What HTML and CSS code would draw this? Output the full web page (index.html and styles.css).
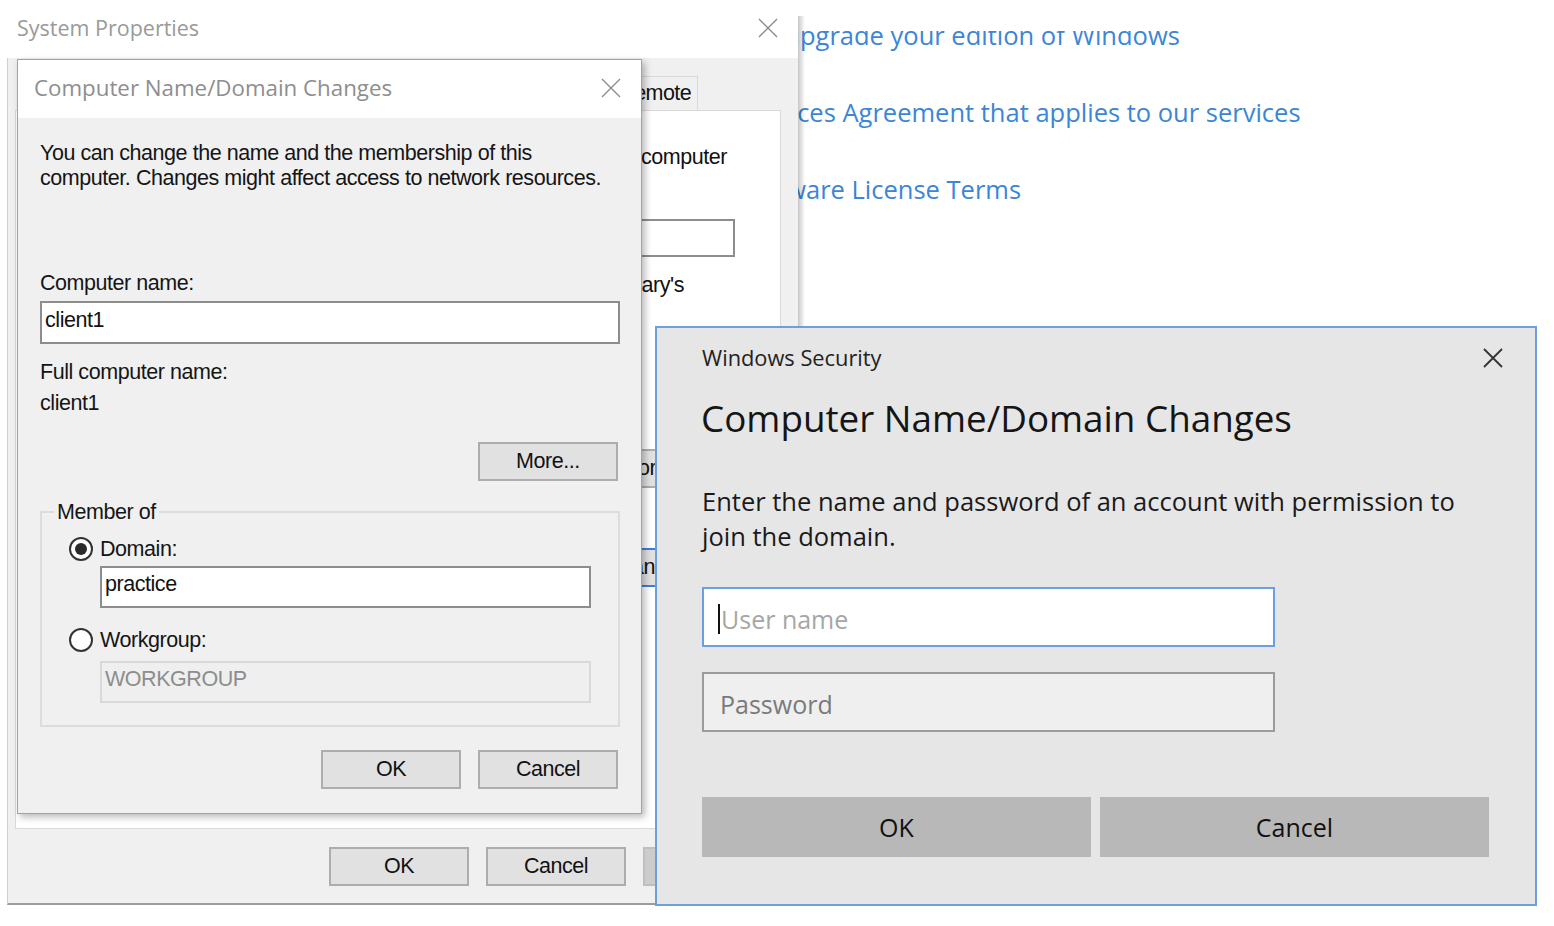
FILE: index.html
```html
<!DOCTYPE html>
<html lang="en">
<head>
<meta charset="utf-8">
<title>Computer Name/Domain Changes</title>
<link rel="stylesheet" href="styles.css">
</head>
<body>
<main class="desktop">

  <section class="settings-window">
    <ul class="settings-links">
      <li><a class="link" href="#">Change product key or upgrade your edition of Windows</a></li>
      <li><a class="link" href="#">Read the Microsoft Services Agreement that applies to our services</a></li>
      <li><a class="link" href="#">Read the Microsoft Software License Terms</a></li>
    </ul>
  </section>

  <section class="sysprops">
    <header class="sp-titlebar">
      <span class="wtitle">System Properties</span>
      <svg class="close-x" viewBox="0 0 20 20" width="20" height="20"><path d="M1 1L19 19M19 1L1 19"/></svg>
    </header>
    <div class="sp-client">
      <nav class="tabs">
        <span class="tab">Remote</span>
      </nav>
      <div class="tabpanel">
        <span class="sp-line intro-end">computer</span>
        <div class="textbox desc-box"></div>
        <span class="sp-line hint-end">Mary's</span>
        <button class="btn sp-btn netid">Network ID...</button>
        <button class="btn sp-btn change focused">Change...</button>
      </div>
      <div class="sp-footer">
        <button class="btn">OK</button>
        <button class="btn">Cancel</button>
        <button class="btn disabled">Apply</button>
      </div>
    </div>
  </section>

  <section class="cndc">
    <header class="cn-titlebar">
      <span class="wtitle">Computer Name/Domain Changes</span>
      <svg class="close-x" viewBox="0 0 20 20" width="20" height="20"><path d="M1 1L19 19M19 1L1 19"/></svg>
    </header>
    <div class="cn-body">
      <p class="cn-intro">You can change the name and the membership of this<br>computer. Changes might affect access to network resources.</p>
      <div class="cn-label first">Computer name:</div>
      <div class="textbox cn-name">client1</div>
      <div class="cn-label full">Full computer name:</div>
      <div class="cn-value">client1</div>
      <button class="btn more">More...</button>
      <fieldset class="groupbox">
        <legend>Member of</legend>
        <div class="radio-row"><span class="radio checked"></span><span>Domain:</span></div>
        <div class="textbox indent domain">practice</div>
        <div class="radio-row second"><span class="radio"></span><span>Workgroup:</span></div>
        <div class="textbox indent wg disabled-box">WORKGROUP</div>
      </fieldset>
      <div class="cn-buttons">
        <button class="btn">OK</button>
        <button class="btn">Cancel</button>
      </div>
    </div>
  </section>

  <section class="winsec">
    <header class="ws-head">
      <span class="ws-app">Windows Security</span>
      <svg class="ws-close" viewBox="0 0 22 22" width="22" height="22"><path d="M2 2L20 20M20 2L2 20"/></svg>
    </header>
    <h1 class="ws-title">Computer Name/Domain Changes</h1>
    <p class="ws-text">Enter the name and password of an account with permission to join the domain.</p>
    <div class="ws-input active"><span class="caret"></span><span class="ph light">User name</span></div>
    <div class="ws-input pw"><span class="ph">Password</span></div>
    <div class="ws-buttons">
      <button class="ws-btn">OK</button>
      <button class="ws-btn">Cancel</button>
    </div>
  </section>

</main>
</body>
</html>
```

FILE: styles.css
```css
* { box-sizing: border-box; margin: 0; padding: 0; }
html, body { width: 1554px; height: 926px; }
body {
  background: #fff;
  font-family: "Liberation Sans", Arial, sans-serif;
  color: #111;
  overflow: hidden;
}
.desktop { position: relative; width: 1554px; height: 926px; overflow: hidden; }

/* ---------- settings page behind (visible only right of the System Properties window) ---------- */
.settings-window {
  position: absolute;
  left: 798px;
  top: 31px;
  width: 750px;
  height: 200px;
  overflow: hidden;
}
.settings-links {
  list-style: none;
  margin-top: -13px;
  margin-left: -290px;
  display: flex;
  flex-direction: column;
  gap: 43px;
}
.settings-links li {
  font-family: "Open Sans", sans-serif;
  font-size: 25.5px;
  line-height: 34px;
  white-space: nowrap;
}
.link { color: #3b86d6; text-decoration: none; }

/* ---------- generic ---------- */
.wtitle {
  font-family: "Open Sans", sans-serif;
  font-size: 21.5px;
  color: #9a9a9a;
}
.close-x { stroke: #8a8a8a; stroke-width: 1.3; fill: none; }

.btn {
  width: 140px;
  height: 39px;
  background: #e1e1e1;
  border: 2px solid #adadad;
  font-family: "Liberation Sans", Arial, sans-serif;
  font-size: 21.5px;
  letter-spacing: -0.45px;
  color: #111;
  display: flex;
  align-items: center;
  justify-content: center;
  flex: none;
}
.btn.focused { border-color: #3d7fd8; }
.btn.disabled { background: #cccccc; border-color: #bfbfbf; color: #838383; }

.textbox {
  background: #fff;
  border: 2px solid #8d8d8d;
  line-height: 25px;
  padding: 5px 3px;
  color: #111;
}

/* ---------- System Properties (back window) ---------- */
.sysprops {
  position: absolute;
  left: 7px;
  top: 0;
  width: 791px;
  height: 905px;
  display: flex;
  flex-direction: column;
}
.sysprops::after {
  content: "";
  position: absolute;
  top: 16px;
  right: -7px;
  bottom: 0;
  width: 7px;
  background: linear-gradient(to right, rgba(0,0,0,.22), rgba(0,0,0,0));
}
.sp-titlebar {
  height: 58px;
  flex: none;
  background: #fff;
  display: flex;
  align-items: center;
  justify-content: space-between;
  padding: 0 20px 3px 10px;
}
.sp-client {
  flex: 1;
  background: #f0f0f0;
  border-left: 1px solid #cfcfcf;
  border-bottom: 2px solid #9c9c9c;
  padding: 18px 15px 0 7px;
  display: flex;
  flex-direction: column;
  font-size: 21.5px;
  letter-spacing: -0.45px;
  line-height: 25px;
}
.tabs {
  height: 34px;
  display: flex;
  justify-content: flex-end;
  padding-right: 85px;
}
.tab {
  padding: 4px 6px 0 8px;
  border: 1px solid #d9d9d9;
  border-bottom: none;
  white-space: nowrap;
  background: #f0f0f0;
  letter-spacing: -0.6px;
}
.tabpanel {
  height: 719px;
  margin-right: 2px;
  background: #fff;
  border: 1px solid #d9d9d9;
  display: flex;
  flex-direction: column;
  align-items: flex-end;
}
.sp-line { white-space: nowrap; }
.intro-end { margin-top: 33.5px; margin-right: 53px; }
.desc-box { margin-top: 49.5px; margin-right: 45px; width: 470px; height: 38px; }
.hint-end { margin-top: 15.5px; margin-right: 96px; }
.sp-btn { margin-right: 60px; }
.netid { margin-top: 151.5px; }
.change { margin-top: 60px; }
.sp-footer {
  margin-top: 18px;
  display: flex;
  justify-content: flex-end;
  gap: 17px;
}

/* ---------- Computer Name/Domain Changes (front classic dialog) ---------- */
.cndc {
  position: absolute;
  left: 17px;
  top: 59px;
  width: 625px;
  height: 755px;
  border: 1px solid #a3a3a3;
  box-shadow: 3px 3px 7px rgba(0,0,0,.28);
  background: #f0f0f0;
  display: flex;
  flex-direction: column;
}
.cn-titlebar {
  height: 58px;
  flex: none;
  background: #fff;
  display: flex;
  align-items: center;
  justify-content: space-between;
  padding: 0 20px 3px 16px;
}
.cn-titlebar .wtitle { font-size: 22.3px; color: #8e8e8e; }
.cn-body {
  flex: 1;
  padding: 22.5px 21px 0 22px;
  display: flex;
  flex-direction: column;
  font-size: 21.5px;
  letter-spacing: -0.45px;
  line-height: 25px;
  color: #151515;
}
.cn-label.first { margin-top: 80px; }
.cn-name { margin-top: 5.5px; height: 43px; padding: 5px 3px; }
.cn-label.full { margin-top: 15.5px; }
.cn-value { margin-top: 6px; }
.more { margin-top: 26.5px; align-self: flex-end; margin-right: 2px; }

.groupbox {
  margin-top: 18.5px;
  border: 2px solid #dcdcdc;
  padding: 0 27px 22px 27px;
  display: flex;
  flex-direction: column;
}
.groupbox legend {
  margin-left: -15px;
  padding: 0 3px;
  line-height: 25px;
}
.radio-row {
  margin-top: 12px;
  display: flex;
  align-items: center;
  gap: 7px;
  height: 25px;
}
.radio-row.second { margin-top: 19.5px; }
.radio {
  width: 24px;
  height: 24px;
  border: 2px solid #333;
  border-radius: 50%;
  background: #fff;
  display: flex;
  align-items: center;
  justify-content: center;
}
.radio.checked::after {
  content: "";
  width: 12px;
  height: 12px;
  border-radius: 50%;
  background: #2a2a2a;
}
.textbox.indent { margin-left: 31px; height: 42px; padding: 4px 3px; }
.textbox.domain { margin-top: 4.5px; }
.textbox.wg { margin-top: 8.5px; }
.disabled-box {
  background: #efefef;
  border-color: #d9d9d9;
  color: #8d8d8d;
}
.cn-buttons {
  margin-top: 23px;
  display: flex;
  justify-content: flex-end;
  gap: 17px;
  padding-right: 2px;
}

/* ---------- Windows Security ---------- */
.winsec {
  position: absolute;
  left: 655px;
  top: 326px;
  width: 882px;
  height: 580px;
  background: #e6e6e6;
  border: 2px solid #6d9fdc;
  padding: 15px 46px 0 45px;
  display: flex;
  flex-direction: column;
  font-family: "Open Sans", sans-serif;
  color: #1a1a1a;
}
.ws-head {
  height: 30px;
  display: flex;
  align-items: center;
  justify-content: space-between;
  margin-right: -15px;
}
.ws-app { font-size: 21.8px; line-height: 30px; color: #222; }
.ws-close { stroke: #333; stroke-width: 1.8; fill: none; }
.ws-title {
  margin-top: 21px;
  margin-left: -1px;
  font-size: 36.8px;
  line-height: 48px;
  font-weight: 400;
  color: #151515;
}
.ws-text {
  margin-top: 42px;
  font-size: 25.5px;
  line-height: 35px;
}
.ws-input {
  width: 573px;
  height: 60px;
  border: 2px solid #9b9b9b;
  background: #efefef;
  display: flex;
  align-items: center;
  padding-left: 16px;
  padding-top: 4px;
  font-size: 25px;
}
.ws-input.active {
  margin-top: 33px;
  background: #fff;
  border-color: #6b9fe2;
  padding-left: 14px;
}
.ws-input.pw { margin-top: 25px; }
.caret { width: 2px; height: 30px; background: #111; margin-right: 1px; }
.ph { color: #7a7a7a; }
.ph.light { color: #a6a6a6; }
.ws-buttons {
  margin-top: 65px;
  display: grid;
  grid-template-columns: 1fr 1fr;
  gap: 9px;
}
.ws-btn {
  height: 60px;
  background: #b8b8b8;
  border: none;
  font-family: "Open Sans", sans-serif;
  font-size: 25px;
  color: #111;
}
```
